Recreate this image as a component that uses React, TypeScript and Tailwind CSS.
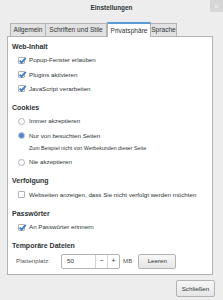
import React from "react";

const font = "font-['Liberation_Sans',Arial,sans-serif]";

function CheckBox() {
	return (
		<span className="relative w-[7px] h-[7px] shrink-0 border border-[#b3b3b3] bg-white rounded-[1px]">
			<svg viewBox="0 0 10 10" className="absolute left-[-1px] top-[-2px] w-[9px] h-[9px]">
				<path d="M1.8 5.2 L4 7.4 L8.6 2" stroke="#3b7bd0" strokeWidth="2" fill="none" />
			</svg>
		</span>
	);
}

function Radio({ checked }: { checked?: boolean }) {
	return (
		<span className="w-[7px] h-[7px] shrink-0 rounded-full border border-[#b3b3b3] bg-white flex items-center justify-center">
			{checked && <span className="w-[5px] h-[5px] rounded-full bg-[#4a86d4]" />}
		</span>
	);
}

function Heading({ children }: { children: React.ReactNode }) {
	return <div className="h-[10px] flex items-center text-[7px] font-bold text-[#2e3436]">{children}</div>;
}

function Row({ children, control }: { children: React.ReactNode; control: React.ReactNode }) {
	return (
		<div className="h-[14.25px] flex items-center pl-[6px] gap-[4px] text-[6.2px] text-[#2e3436]">
			{control}
			<span>{children}</span>
		</div>
	);
}

export default function App() {
	return (
		<div className={`w-[223px] h-[300px] bg-[#ededed] relative overflow-hidden ${font}`}>
			{/* title bar */}
			<div className="h-[15px] flex items-center justify-center text-[6.4px] font-bold text-[#2e3436]">
				Einstellungen
			</div>
			<div className="absolute right-0 top-0 w-[13px] h-[12px] bg-[#d6d6d6] flex items-center justify-center">
				<svg viewBox="0 0 8 8" className="w-[5px] h-[5px]">
					<path d="M1 1 L7 7 M7 1 L1 7" stroke="#f4f4f4" strokeWidth="1.6" />
				</svg>
			</div>

			{/* tabs */}
			<div className="mt-[7px] h-[14px] pl-[10px] flex items-end text-[6.6px] text-[#2e3436]">
				<div className="h-[13px] w-[36px] flex items-center justify-center bg-[#e2e2e2] border border-b-0 border-[#b3b3b3]">
					Allgemein
				</div>
				<div className="h-[13px] w-[61px] flex items-center justify-center bg-[#e2e2e2] border border-b-0 border-l-0 border-[#b3b3b3]">
					Schriften und Stile
				</div>
				<div className="relative z-10 h-[15px] mb-[-1px] w-[44px] flex items-center justify-center bg-white border-t-2 border-t-[#5b9bd5] border-x border-x-[#b3b3b3]">
					Privatsphäre
				</div>
				<div className="h-[13px] w-[26px] flex items-center justify-center bg-[#e2e2e2] border border-b-0 border-l-0 border-[#b3b3b3]">
					Sprache
				</div>
			</div>

			{/* panel */}
			<div className="ml-[7px] w-[206px] bg-white border border-[#b3b3b3] pt-[5px] pl-[4px] pb-[4px]">
				<Heading>Web-Inhalt</Heading>
				<div className="mt-[1px]">
					<Row control={<CheckBox />}>Popup-Fenster erlauben</Row>
					<Row control={<CheckBox />}>Plugins aktivieren</Row>
					<Row control={<CheckBox />}>JavaScript verarbeiten</Row>
				</div>

				<div className="mt-[7.25px]">
					<Heading>Cookies</Heading>
				</div>
				<div className="mt-[1px]">
					<Row control={<Radio />}>Immer akzeptieren</Row>
					<Row control={<Radio checked />}>Nur von besuchten Seiten</Row>
					<div className="h-[12.5px] flex items-center pl-[17px] text-[5.3px] text-[#2e3436]">
						Zum Beispiel nicht von Werbekunden dieser Seite
					</div>
					<Row control={<Radio />}>Nie akzeptieren</Row>
				</div>

				<div className="mt-[7.25px]">
					<Heading>Verfolgung</Heading>
				</div>
				<div className="mt-[1px]">
					<Row control={<span className="w-[7px] h-[7px] shrink-0 border border-[#b3b3b3] bg-white rounded-[1px]" />}>
						Webseiten anzeigen, dass Sie nicht verfolgt werden möchten
					</Row>
				</div>

				<div className="mt-[7.25px]">
					<Heading>Passwörter</Heading>
				</div>
				<div className="mt-[1px]">
					<Row control={<CheckBox />}>An Passwörter erinnern</Row>
				</div>

				<div className="mt-[7.25px]">
					<Heading>Temporäre Dateien</Heading>
				</div>
				<div className="mt-[1px] h-[17px] flex items-center text-[6.2px] text-[#2e3436]">
					<span className="ml-[4px] w-[45px] text-[#555753]">Plattenplatz:</span>
					<div className="w-[59px] h-[15px] flex border border-[#b3b3b3] rounded-[2px] bg-white">
						<span className="flex-1 flex items-center pl-[5px]">50</span>
						<span className="w-[12px] flex items-center justify-center border-l border-[#d3d3d3] text-[7px]">−</span>
						<span className="w-[12px] flex items-center justify-center border-l border-[#d3d3d3] text-[7px]">+</span>
					</div>
					<span className="ml-[3px] text-[#555753]">MB</span>
					<button className="ml-[6px] w-[38px] h-[15px] border border-[#b3b3b3] rounded-[2px] bg-gradient-to-b from-[#f7f7f7] to-[#e6e6e6] text-[6.2px] text-[#2e3436]">
						Leeren
					</button>
				</div>
			</div>

			{/* footer */}
			<div className="mt-[5.5px] flex justify-end pr-[8px]">
				<button className="w-[39px] h-[17px] border border-[#b3b3b3] rounded-[2px] bg-gradient-to-b from-[#f7f7f7] to-[#e6e6e6] text-[6.2px] text-[#2e3436]">
					Schließen
				</button>
			</div>
		</div>
	);
}
